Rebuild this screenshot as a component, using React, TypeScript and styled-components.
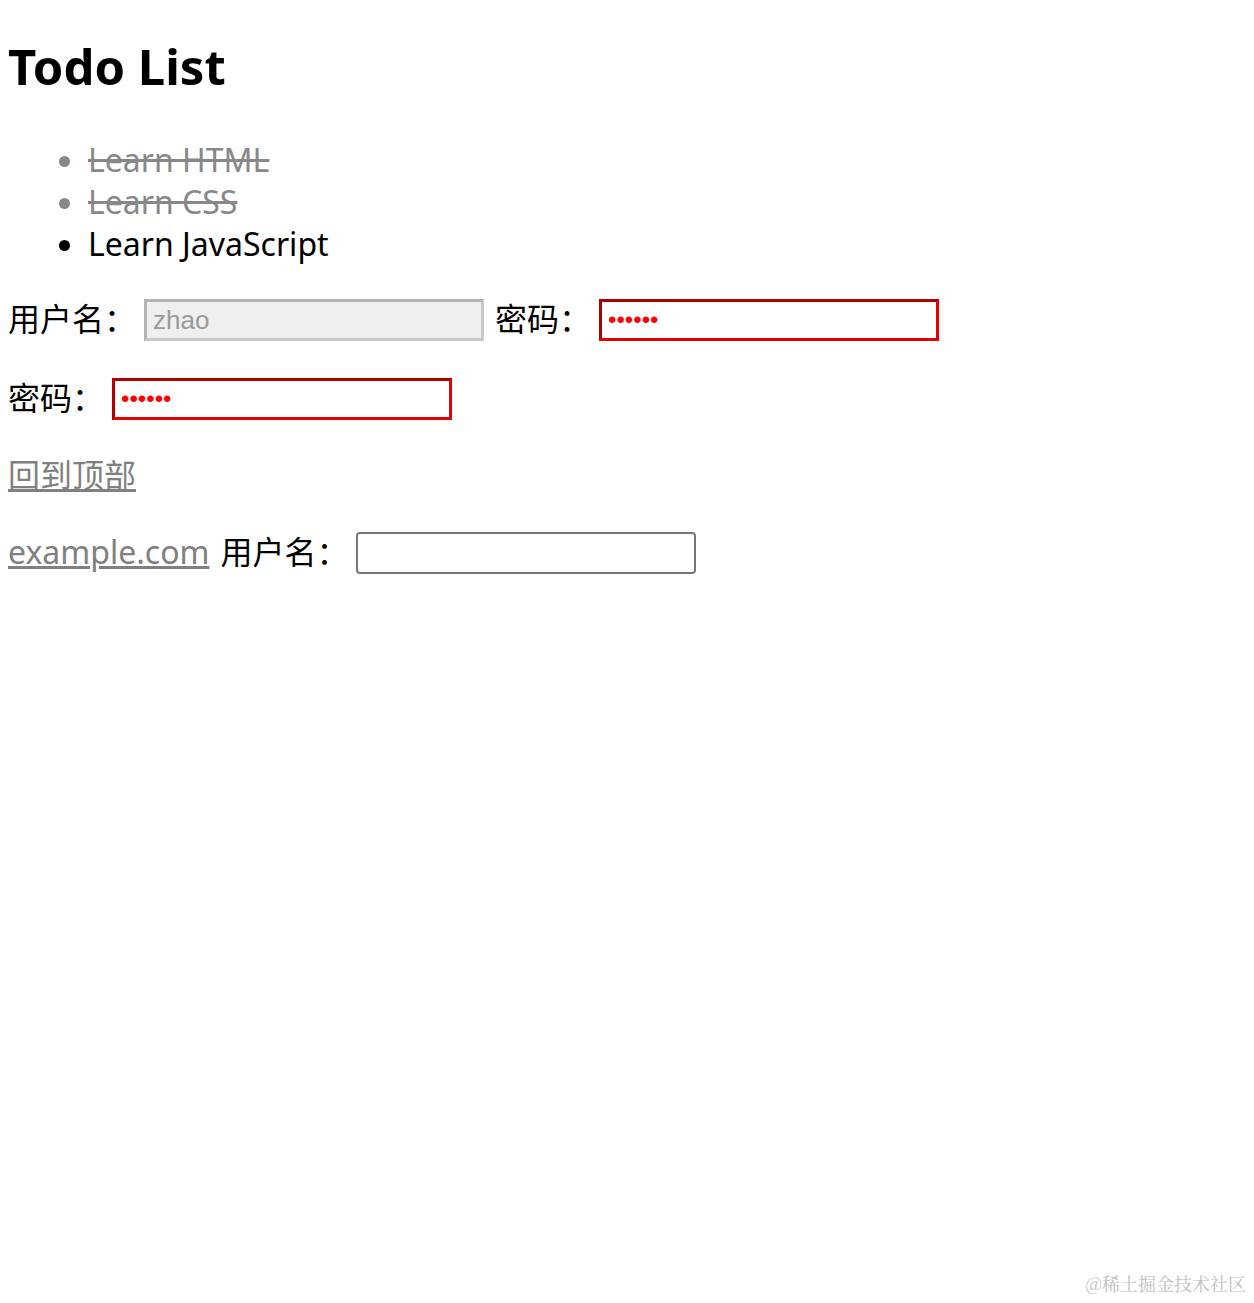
import React from "react";
import styled, { createGlobalStyle } from "styled-components";

const Global = createGlobalStyle`
  html, body { margin: 0; padding: 0; background: #fff; }
  body {
    font-family: "Noto Sans", "Noto Sans CJK SC", sans-serif;
    color: #000;
  }
`;

const Page = styled.div`
  position: relative;
  display: flow-root;
  height: 1303px;
  padding: 0 8px;
  box-sizing: border-box;
  overflow: hidden;
`;

const Title = styled.h1`
  margin: 36px 0 0;
  font-size: 49px;
  line-height: 60px;
  font-weight: 700;
`;

const TodoList = styled.ul`
  margin: 43px 0 0;
  padding-left: 80px;
  list-style: disc;
`;

const Item = styled.li<{ $done?: boolean }>`
  font-size: 32px;
  line-height: 42px;
  color: ${(p) => (p.$done ? "#888" : "#000")};
  text-decoration: ${(p) => (p.$done ? "line-through" : "none")};
`;

const Stack = styled.div`
  margin-top: 34px;
  display: flex;
  flex-direction: column;
  gap: 37px;
`;

const Row = styled.div<{ $h?: number }>`
  display: flex;
  align-items: center;
  height: ${(p) => p.$h ?? 42}px;
  font-size: 32px;
`;

const Label = styled.label`
  margin-right: 8px;
  padding-bottom: 6px;
  white-space: nowrap;
`;

const Field = styled.input<{ $variant?: "disabled" | "danger" | "plain" }>`
  box-sizing: border-box;
  width: 340px;
  height: 42px;
  padding: 0 6px;
  margin-right: 11px;
  font-family: "Liberation Sans", Arial, sans-serif;
  font-size: 26px;
  outline: none;
  ${(p) =>
    p.$variant === "disabled"
      ? `background:#efefef; color:#9a9a9a; border:3px solid; border-color:#b4b4b4 #c9c9c9 #c9c9c9 #b4b4b4;`
      : p.$variant === "danger"
      ? `background:#fff; color:#f00; border:3px solid; border-color:#b00000 #e60000 #e60000 #b00000; font-size:24px;`
      : `background:#fff; border:2px solid #767676; border-radius:4px;`}
`;

const Link = styled.a`
  color: #808080;
  text-decoration: underline;
  font-size: 32px;
  line-height: 42px;
  padding-bottom: 2px;
  margin-right: 11px;
`;

const Watermark = styled.div`
  position: absolute;
  right: 8px;
  bottom: 7px;
  font-family: "Noto Serif CJK SC", "Noto Sans CJK SC", serif;
  font-size: 18px;
  color: #c0c0c0;
`;

export default function App() {
  return (
    <Page>
      <Global />
      <Title>Todo List</Title>
      <TodoList>
        <Item $done>Learn HTML</Item>
        <Item $done>Learn CSS</Item>
        <Item>Learn JavaScript</Item>
      </TodoList>
      <Stack>
        <Row>
          <Label>用户名：</Label>
          <Field $variant="disabled" disabled defaultValue="zhao" />
          <Label>密码：</Label>
          <Field $variant="danger" type="password" defaultValue="123456" />
        </Row>
        <Row>
          <Label>密码：</Label>
          <Field $variant="danger" type="password" defaultValue="123456" />
        </Row>
        <Row $h={38}>
          <Link href="#top">回到顶部</Link>
        </Row>
        <Row>
          <Link href="#">example.com</Link>
          <Label>用户名：</Label>
          <Field $variant="plain" />
        </Row>
      </Stack>
      <Watermark>@稀土掘金技术社区</Watermark>
    </Page>
  );
}
